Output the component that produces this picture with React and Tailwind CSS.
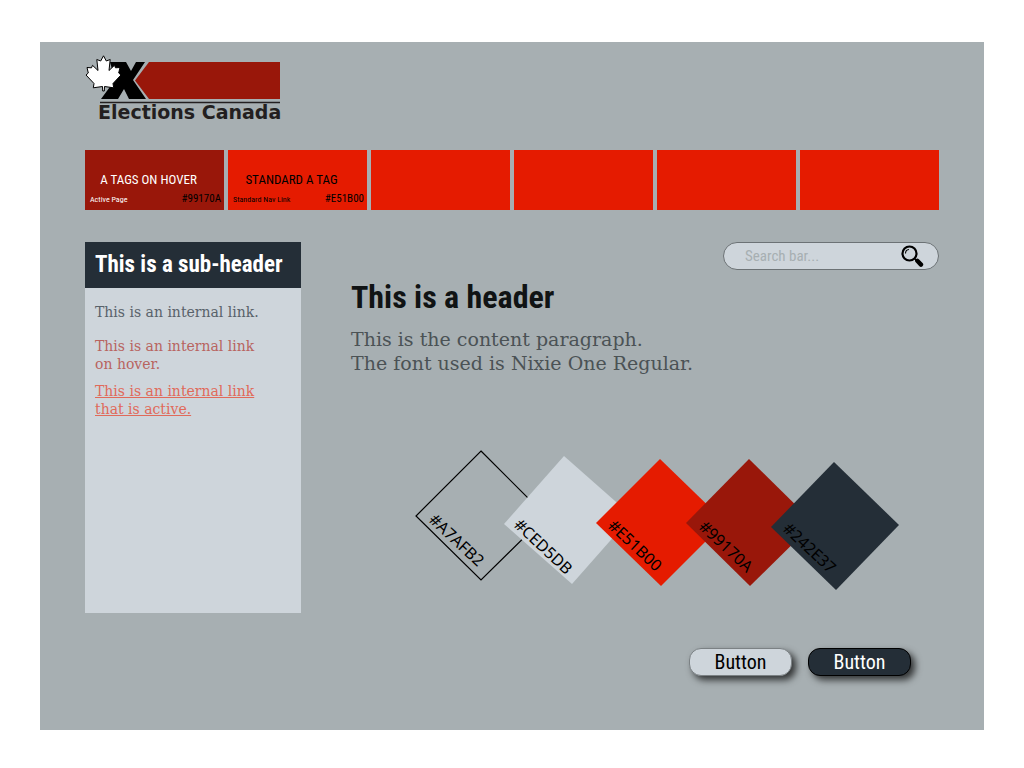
const navItems = [
  { label: "A TAGS ON HOVER", note: "Active Page", hex: "#99170A", active: true },
  { label: "STANDARD A TAG", note: "Standard Nav Link", hex: "#E51B00" },
  {},
  {},
  {},
  {},
];

const swatches = [
  { hex: "#A7AFB2", points: "66,1 131,66 66,130 1,66", fill: "none", stroke: "#000", x: 13, y: 71 },
  { hex: "#CED5DB", points: "149,6 217,66 157,134 89,74", fill: "#ced5db", x: 98, y: 76 },
  { hex: "#E51B00", points: "245,9 310,72 246,136 181,73", fill: "#e51b00", x: 192, y: 77 },
  { hex: "#99170A", points: "334,9 399,73 335,136 271,73", fill: "#99170a", x: 283, y: 78 },
  { hex: "#242E37", points: "419,12 484,75 421,140 356,77", fill: "#242e37", x: 367, y: 80 },
];

function Logo() {
  return (
    <a href="#home" className="block w-fit">
      <svg width="196" height="68" viewBox="0 0 196 68" role="img" aria-label="Elections Canada">
        <path d="M64 7H195V44H64L50 25.500Z" fill="#99170a" />
        <path d="M25 7H41L46 16L51 7H60L48 25L61 44H44L39 34L33 44H16L30 25Z" fill="#000" />
        <path
          d="M18.500 .8L21.300 6L25.200 4.500L24 15.500L29.500 10.300L30.500 12.800L35 12.500L33.700 18L36 20L28 28.500L28.700 32.800L19.500 31.500L19.300 36H17.700L17.500 31.500L8.300 32.800L9 28.500L1 20L3.300 18L2 12.500L6.500 12.800L7.500 10.300L13 15.500L11.800 4.500L15.700 6Z"
          fill="#fff"
          stroke="#000"
          strokeWidth="1"
          strokeLinejoin="round"
        />
        <path d="M15 47.500H195" stroke="#231f20" strokeWidth="1.500" />
        <text x="13" y="64" className="fill-[#231f20] text-[19px] font-bold [font-family:'DejaVu_Sans',sans-serif]">
          Elections Canada
        </text>
      </svg>
    </a>
  );
}

function NavItem({ label, note, hex, active }) {
  return (
    <a
      href="#nav"
      className={
        active
          ? "flex h-[60px] flex-col justify-end bg-[#99170a] text-white"
          : "flex h-[60px] flex-col justify-end bg-[#e51b00] text-black"
      }
    >
      {label && (
        <>
          <span className="pr-3 text-center text-[13px] leading-5">{label}</span>
          <span className="flex items-baseline justify-between pb-px pl-[5px] pr-[3px] leading-[18px]">
            <span className="text-[8px]">{note}</span>
            <span className="text-[11px] text-black">{hex}</span>
          </span>
        </>
      )}
    </a>
  );
}

function Search() {
  return (
    <form
      role="search"
      className="flex h-7 w-[216px] items-center self-end rounded-[14px] border border-[#6c7275] bg-[#ced5db] pl-[21px] pr-[14px]"
    >
      <input
        type="search"
        aria-label="Search"
        placeholder="Search bar..."
        className="min-w-0 flex-1 bg-transparent text-[15px] outline-none placeholder:text-[#a7afb2]"
      />
      <button type="button" aria-label="Submit search">
        <svg width="24" height="24" viewBox="0 0 24 24" fill="none">
          <circle cx="9.500" cy="9.500" r="7" stroke="#000" strokeWidth="2.200" />
          <path d="M5.500 9.500C5.500 7.500 7 5.700 9 5.500" stroke="#000" strokeWidth="1.100" />
          <path d="M14.500 14.500L17 17" stroke="#000" strokeWidth="1.500" />
          <path d="M17.300 16.800L21 20.600" stroke="#000" strokeWidth="4.400" strokeLinecap="round" />
        </svg>
      </button>
    </form>
  );
}

function Sidebar() {
  return (
    <aside className="min-h-[371px] w-[216px] shrink-0 bg-[#ced5db]">
      <h2 className="bg-[#242e37] px-[10px] py-[9px] text-[23px] font-bold leading-7 text-white">
        This is a sub-header
      </h2>
      <nav
        aria-label="Internal links"
        className="flex flex-col px-[10px] pt-[15px] text-[14px] leading-[18px] [font-family:'DejaVu_Serif',serif]"
      >
        <a href="#link" className="text-[#59626a]">This is an internal link.</a>
        <a href="#hover" className="mt-4 text-[#b8645f]">
          This is an internal link<br />on hover.
        </a>
        <a href="#active" className="mt-[9px] text-[#e06a5a] underline">
          This is an internal link<br />that is active.
        </a>
      </nav>
    </aside>
  );
}

function Palette() {
  return (
    <svg width="485" height="142" viewBox="0 0 485 142" role="img" aria-label="Colour palette" className="ml-16 mt-[75px]">
      {swatches.map((s) => (
        <g key={s.hex}>
          <polygon points={s.points} fill={s.fill} stroke={s.stroke} strokeWidth="1.200" />
          <text
            x={s.x}
            y={s.y}
            transform={`rotate(43 ${s.x} ${s.y})`}
            className="fill-black text-[16px] [font-family:'Noto_Sans',sans-serif]"
          >
            {s.hex}
          </text>
        </g>
      ))}
    </svg>
  );
}

export default function App() {
  return (
    <div className="min-h-screen bg-white px-10 pb-[38px] pt-[42px] [font-family:'Roboto_Condensed',Roboto,sans-serif]">
      <div className="bg-[#a7afb2] px-[45px] pb-[54px] pt-[13px]">
        <header>
          <Logo />
          <nav aria-label="Main" className="mt-[27px] grid grid-cols-6 gap-1">
            {navItems.map((item, i) => (
              <NavItem key={i} {...item} />
            ))}
          </nav>
        </header>
        <div className="mt-8 flex items-start gap-[50px]">
          <Sidebar />
          <main className="flex flex-1 flex-col">
            <Search />
            <h1 className="mt-[9px] text-[32px] font-bold leading-9 text-[#101314]">This is a header</h1>
            <p className="mt-3 text-[19px] leading-6 text-[#4b5255] [font-family:'DejaVu_Serif',serif]">
              This is the content paragraph.<br />The font used is Nixie One Regular.
            </p>
            <Palette />
            <div className="mr-7 mt-14 flex justify-end gap-4 text-[20px]">
              <button
                type="button"
                className="h-7 w-[103px] rounded-[12px] border border-[#7b8184] bg-[#ced5db] leading-6 text-black shadow-[4px_4px_7px_rgba(0,0,0,0.7)]"
              >
                Button
              </button>
              <button
                type="button"
                className="h-7 w-[103px] rounded-[12px] border border-black bg-[#242e37] leading-6 text-white shadow-[4px_4px_7px_rgba(0,0,0,0.7)]"
              >
                Button
              </button>
            </div>
          </main>
        </div>
      </div>
    </div>
  );
}
